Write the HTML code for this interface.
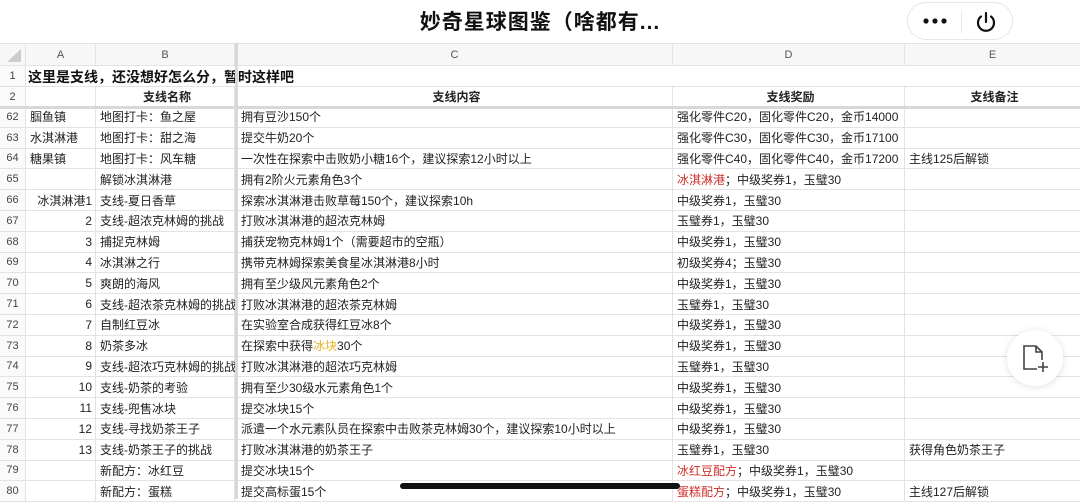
<!DOCTYPE html>
<html><head><meta charset="utf-8"><style>
*{margin:0;padding:0;box-sizing:border-box}
body{width:1080px;height:499px;overflow:hidden;background:#fff;font-family:"Liberation Sans","Noto Sans CJK SC",sans-serif;position:relative;color:#222}
.t{position:absolute;top:6px;left:0;width:1080px;text-align:center;font-size:21px;font-weight:bold;color:#111;letter-spacing:1px}
.cap{position:absolute;left:907px;top:2px;width:106px;height:38px;border:1px solid #e6e6e6;border-radius:19px;background:#fff}
.cap .sep{position:absolute;left:53px;top:8px;width:1px;height:22px;background:#e6e6e6}
.row{position:absolute;left:0;width:1080px;border-bottom:1px solid #e3e3e3;font-size:12px}
.c{position:absolute;top:0;height:100%;border-right:1px solid #e3e3e3;white-space:nowrap;overflow:visible;display:flex;align-items:center;padding-left:4px}
.n{left:0;width:26px;justify-content:center;padding:0;color:#444;font-size:11px;background:#fafafa}
.a{left:26px;width:70px}.b{left:96px;width:139px}.cc{left:237px;width:436px}.d{left:673px;width:232px}.e{left:905px;width:175px;border-right:none}
.r{justify-content:flex-end;padding-right:3px}
.hd{background:#f7f7f7;color:#555;font-size:11px;justify-content:center;padding:0}
.red{color:#d0302a}.yel{color:#e6b422}
.frz{position:absolute;left:235px;top:43px;width:3px;height:456px;background:#d8d8d8}
.hfrz{position:absolute;left:0;top:106px;width:1080px;height:3px;background:#d8d8d8}
</style></head><body>
<div class="t">妙奇星球图鉴（啥都有...</div>
<div class="cap"><svg style="position:absolute;left:14px;top:14px" width="26" height="8"><circle cx="4" cy="4" r="2.6" fill="#111"/><circle cx="13" cy="4" r="2.6" fill="#111"/><circle cx="22" cy="4" r="2.6" fill="#111"/></svg><div class="sep"></div><svg style="position:absolute;left:66px;top:7px" width="24" height="24" viewBox="0 0 24 24" fill="none" stroke="#111" stroke-width="2.2" stroke-linecap="round"><path d="M12 3v9"/><path d="M7 6.5a8 8 0 1 0 10 0"/></svg></div>

<div class="row" style="top:43px;height:23px;background:#f7f7f7;border-top:1px solid #e3e3e3"><div class="c n hd"><svg width="20" height="16"><path d="M18 2L18 15L4 15Z" fill="#ccc"/></svg></div><div class="c a hd">A</div><div class="c b hd">B</div><div class="c cc hd">C</div><div class="c d hd">D</div><div class="c e hd">E</div></div>
<div class="row" style="top:66px;height:21px"><div class="c n">1</div><div style="position:absolute;left:28px;top:0;height:21px;display:flex;align-items:center;font-size:14px;font-weight:bold;color:#111">这里是支线，还没想好怎么分，暂时这样吧</div></div>
<div class="row" style="top:87px;height:20px;font-weight:bold"><div class="c n" style="font-weight:normal">2</div><div class="c a"></div><div class="c b" style="justify-content:center">支线名称</div><div class="c cc" style="justify-content:center">支线内容</div><div class="c d" style="justify-content:center">支线奖励</div><div class="c e" style="justify-content:center">支线备注</div></div>

<div style="position:absolute;top:107px;left:0">
<div class="row" style="top:0px;height:20.8px"><div class="c n">62</div><div class="c a">腘鱼镇</div><div class="c b">地图打卡：鱼之屋</div><div class="c cc">拥有豆沙150个</div><div class="c d">强化零件C20，固化零件C20，金币14000</div><div class="c e"></div></div>
<div class="row" style="top:20.8px;height:20.8px"><div class="c n">63</div><div class="c a">水淇淋港</div><div class="c b">地图打卡：甜之海</div><div class="c cc">提交牛奶20个</div><div class="c d">强化零件C30，固化零件C30，金币17100</div><div class="c e"></div></div>
<div class="row" style="top:41.6px;height:20.8px"><div class="c n">64</div><div class="c a">糖果镇</div><div class="c b">地图打卡：风车糖</div><div class="c cc">一次性在探索中击败奶小糖16个，建议探索12小时以上</div><div class="c d">强化零件C40，固化零件C40，金币17200</div><div class="c e">主线125后解锁</div></div>
<div class="row" style="top:62.4px;height:20.8px"><div class="c n">65</div><div class="c a"></div><div class="c b">解锁冰淇淋港</div><div class="c cc">拥有2阶火元素角色3个</div><div class="c d"><span class="red">冰淇淋港</span>；中级奖券1，玉璧30</div><div class="c e"></div></div>
<div class="row" style="top:83.2px;height:20.8px"><div class="c n">66</div><div class="c a r">冰淇淋港1</div><div class="c b">支线-夏日香草</div><div class="c cc">探索冰淇淋港击败草莓150个，建议探索10h</div><div class="c d">中级奖券1，玉璧30</div><div class="c e"></div></div>
<div class="row" style="top:104px;height:20.8px"><div class="c n">67</div><div class="c a r">2</div><div class="c b">支线-超浓克林姆的挑战</div><div class="c cc">打败冰淇淋港的超浓克林姆</div><div class="c d">玉璧券1，玉璧30</div><div class="c e"></div></div>
<div class="row" style="top:124.8px;height:20.8px"><div class="c n">68</div><div class="c a r">3</div><div class="c b">捕捉克林姆</div><div class="c cc">捕获宠物克林姆1个（需要超市的空瓶）</div><div class="c d">中级奖券1，玉璧30</div><div class="c e"></div></div>
<div class="row" style="top:145.6px;height:20.8px"><div class="c n">69</div><div class="c a r">4</div><div class="c b">冰淇淋之行</div><div class="c cc">携带克林姆探索美食星冰淇淋港8小时</div><div class="c d">初级奖券4；玉璧30</div><div class="c e"></div></div>
<div class="row" style="top:166.4px;height:20.8px"><div class="c n">70</div><div class="c a r">5</div><div class="c b">爽朗的海风</div><div class="c cc">拥有至少级风元素角色2个</div><div class="c d">中级奖券1，玉璧30</div><div class="c e"></div></div>
<div class="row" style="top:187.2px;height:20.8px"><div class="c n">71</div><div class="c a r">6</div><div class="c b">支线-超浓茶克林姆的挑战</div><div class="c cc">打败冰淇淋港的超浓茶克林姆</div><div class="c d">玉璧券1，玉璧30</div><div class="c e"></div></div>
<div class="row" style="top:208px;height:20.8px"><div class="c n">72</div><div class="c a r">7</div><div class="c b">自制红豆冰</div><div class="c cc">在实验室合成获得红豆冰8个</div><div class="c d">中级奖券1，玉璧30</div><div class="c e"></div></div>
<div class="row" style="top:228.8px;height:20.8px"><div class="c n">73</div><div class="c a r">8</div><div class="c b">奶茶多冰</div><div class="c cc">在探索中获得<span class="yel">冰块</span>30个</div><div class="c d">中级奖券1，玉璧30</div><div class="c e"></div></div>
<div class="row" style="top:249.6px;height:20.8px"><div class="c n">74</div><div class="c a r">9</div><div class="c b">支线-超浓巧克林姆的挑战</div><div class="c cc">打败冰淇淋港的超浓巧克林姆</div><div class="c d">玉璧券1，玉璧30</div><div class="c e"></div></div>
<div class="row" style="top:270.4px;height:20.8px"><div class="c n">75</div><div class="c a r">10</div><div class="c b">支线-奶茶的考验</div><div class="c cc">拥有至少30级水元素角色1个</div><div class="c d">中级奖券1，玉璧30</div><div class="c e"></div></div>
<div class="row" style="top:291.2px;height:20.8px"><div class="c n">76</div><div class="c a r">11</div><div class="c b">支线-兜售冰块</div><div class="c cc">提交冰块15个</div><div class="c d">中级奖券1，玉璧30</div><div class="c e"></div></div>
<div class="row" style="top:312px;height:20.8px"><div class="c n">77</div><div class="c a r">12</div><div class="c b">支线-寻找奶茶王子</div><div class="c cc">派遣一个水元素队员在探索中击败茶克林姆30个，建议探索10小时以上</div><div class="c d">中级奖券1，玉璧30</div><div class="c e"></div></div>
<div class="row" style="top:332.8px;height:20.8px"><div class="c n">78</div><div class="c a r">13</div><div class="c b">支线-奶茶王子的挑战</div><div class="c cc">打败冰淇淋港的奶茶王子</div><div class="c d">玉璧券1，玉璧30</div><div class="c e">获得角色奶茶王子</div></div>
<div class="row" style="top:353.6px;height:20.8px"><div class="c n">79</div><div class="c a"></div><div class="c b">新配方：冰红豆</div><div class="c cc">提交冰块15个</div><div class="c d"><span class="red">冰红豆配方</span>；中级奖券1，玉璧30</div><div class="c e"></div></div>
<div class="row" style="top:374.4px;height:20.8px"><div class="c n">80</div><div class="c a"></div><div class="c b">新配方：蛋糕</div><div class="c cc">提交高标蛋15个</div><div class="c d"><span class="red">蛋糕配方</span>；中级奖券1，玉璧30</div><div class="c e">主线127后解锁</div></div>
</div>
<div class="hfrz"></div>
<div class="frz"></div>
<div style="position:absolute;left:1007px;top:330px;width:56px;height:56px;border-radius:50%;background:#fff;box-shadow:0 1px 8px rgba(0,0,0,.12)"><svg style="position:absolute;left:14px;top:13px" width="28" height="30" viewBox="0 0 28 30" fill="none" stroke="#444" stroke-width="1.6"><path d="M16 26H3V3h12l6 6v8"/><path d="M15 3v6h6"/><path d="M22 19v10M17 24h10"/></svg></div>
<div style="position:absolute;left:400px;top:483px;width:280px;height:6px;border-radius:3px;background:#111"></div>
</body></html>
